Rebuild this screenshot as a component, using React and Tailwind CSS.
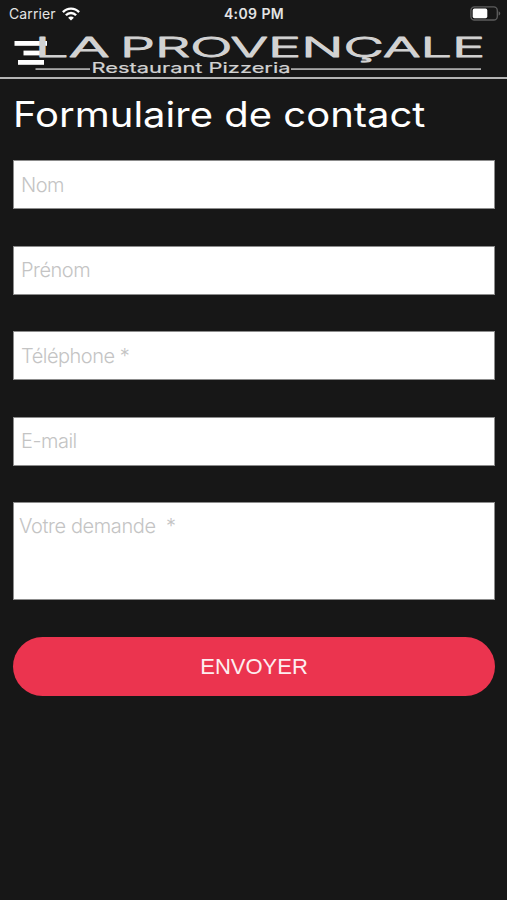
const fields = [
  { name: "nom", type: "text", placeholder: "Nom" },
  { name: "prenom", type: "text", placeholder: "Prénom" },
  { name: "telephone", type: "tel", placeholder: "Téléphone *" },
  { name: "email", type: "email", placeholder: "E-mail" },
];

function StatusBar() {
  return (
    <div className="grid h-7 grid-cols-3 items-center pl-[9px] pr-[6px] font-['Inter',sans-serif] text-[#e4e4e4]">
      <div className="flex items-center gap-[6px]">
        <span className="text-sm tracking-[0.1px]">Carrier</span>
        <svg width="18" height="14" viewBox="0 0 18 14" fill="none" stroke="#fff" strokeWidth="2.4">
          <path d="M0.9 5.1C5.4 0.4 12.6 0.4 17.1 5.1" />
          <path d="M3.9 8.3C6.7 5.3 11.3 5.3 14.1 8.3" />
          <path d="M9 13.6L6.1 10.7C7.7 9.1 10.3 9.1 11.9 10.7Z" fill="#fff" stroke="none" />
        </svg>
      </div>
      <span className="-ml-[2px] text-center text-sm font-semibold tracking-[0.4px]">4:09 PM</span>
      <svg className="-mt-0.5 justify-self-end" width="31" height="15" viewBox="0 0 31 15">
        <rect x="0.9" y="0.8" width="26.4" height="13.2" rx="3.6" fill="none" stroke="#5e5e5e" strokeWidth="1.3" />
        <rect x="2.7" y="2.6" width="14.6" height="9.6" rx="1.8" fill="#fff" />
        <path d="M28.6 5.2C30.8 6 30.8 8.8 28.6 9.6Z" fill="#5e5e5e" />
      </svg>
    </div>
  );
}

function Header() {
  return (
    <header className="h-[51px] border-b-2 border-[#b5b5b5]">
      <svg className="block" width="507" height="49" viewBox="0 28 507 49">
        {/* Menu icon */}
        <g fill="#fff">
          <rect x="14.5" y="41" width="32.5" height="4.8" />
          <rect x="23.5" y="50.6" width="19.5" height="4.8" />
          <rect x="18" y="60" width="26" height="4.8" />
        </g>

        {/* Logo */}
        <g fill="#d2d2d2" stroke="#d2d2d2" fontFamily="Inter, sans-serif">
          <g fontSize="27" fontWeight="300" strokeWidth="0.9" strokeLinejoin="round">
            <text x="34.5" y="57.3" textLength="75" lengthAdjust="spacingAndGlyphs">LA</text>
            <text x="120" y="57.3" textLength="365" lengthAdjust="spacingAndGlyphs">PROVENÇALE</text>
          </g>
          <text x="91.5" y="73.4" fontSize="14.5" strokeWidth="0.2" textLength="199" lengthAdjust="spacingAndGlyphs">
            Restaurant Pizzeria
          </text>
        </g>
        <g fill="#a8a8a8">
          <rect x="35.5" y="68.2" width="54.5" height="1.8" />
          <rect x="291" y="68.2" width="190" height="1.8" />
        </g>
      </svg>
    </header>
  );
}

export default function App() {
  return (
    <div className="h-[900px] w-[507px] overflow-hidden bg-[#171717]">
      <StatusBar />
      <Header />

      <main className="pl-[13px] pr-3 font-['Liberation_Sans',sans-serif]">
        <h1 className="h-[81.4px] w-max origin-left scale-x-[1.143] whitespace-nowrap pt-[9px] font-['Inter',sans-serif] text-[35px] leading-[52px] text-white">
          Formulaire de contact
        </h1>

        <form className="flex flex-col gap-[36.5px]">
          {fields.map((field) => (
            <input
              key={field.name}
              name={field.name}
              type={field.type}
              placeholder={field.placeholder}
              className="h-[49px] w-full border border-[#8c8c8c] bg-white px-[7px] font-['Inter',sans-serif] text-[20px] font-light tracking-[-0.5px] placeholder:text-[#c4c4c4]"
            />
          ))}
          <textarea
            name="demande"
            placeholder="Votre demande  *"
            className="block h-[98px] w-full resize-none border border-[#8c8c8c] bg-white px-[5px] pt-2 font-['Inter',sans-serif] text-[20px] font-light tracking-[-0.4px] placeholder:text-[#c4c4c4]"
          />
          <button type="button" className="h-[59px] w-full rounded-full bg-[#eb344f] text-[22px] text-[#fdeef0]">
            ENVOYER
          </button>
        </form>
      </main>
    </div>
  );
}
